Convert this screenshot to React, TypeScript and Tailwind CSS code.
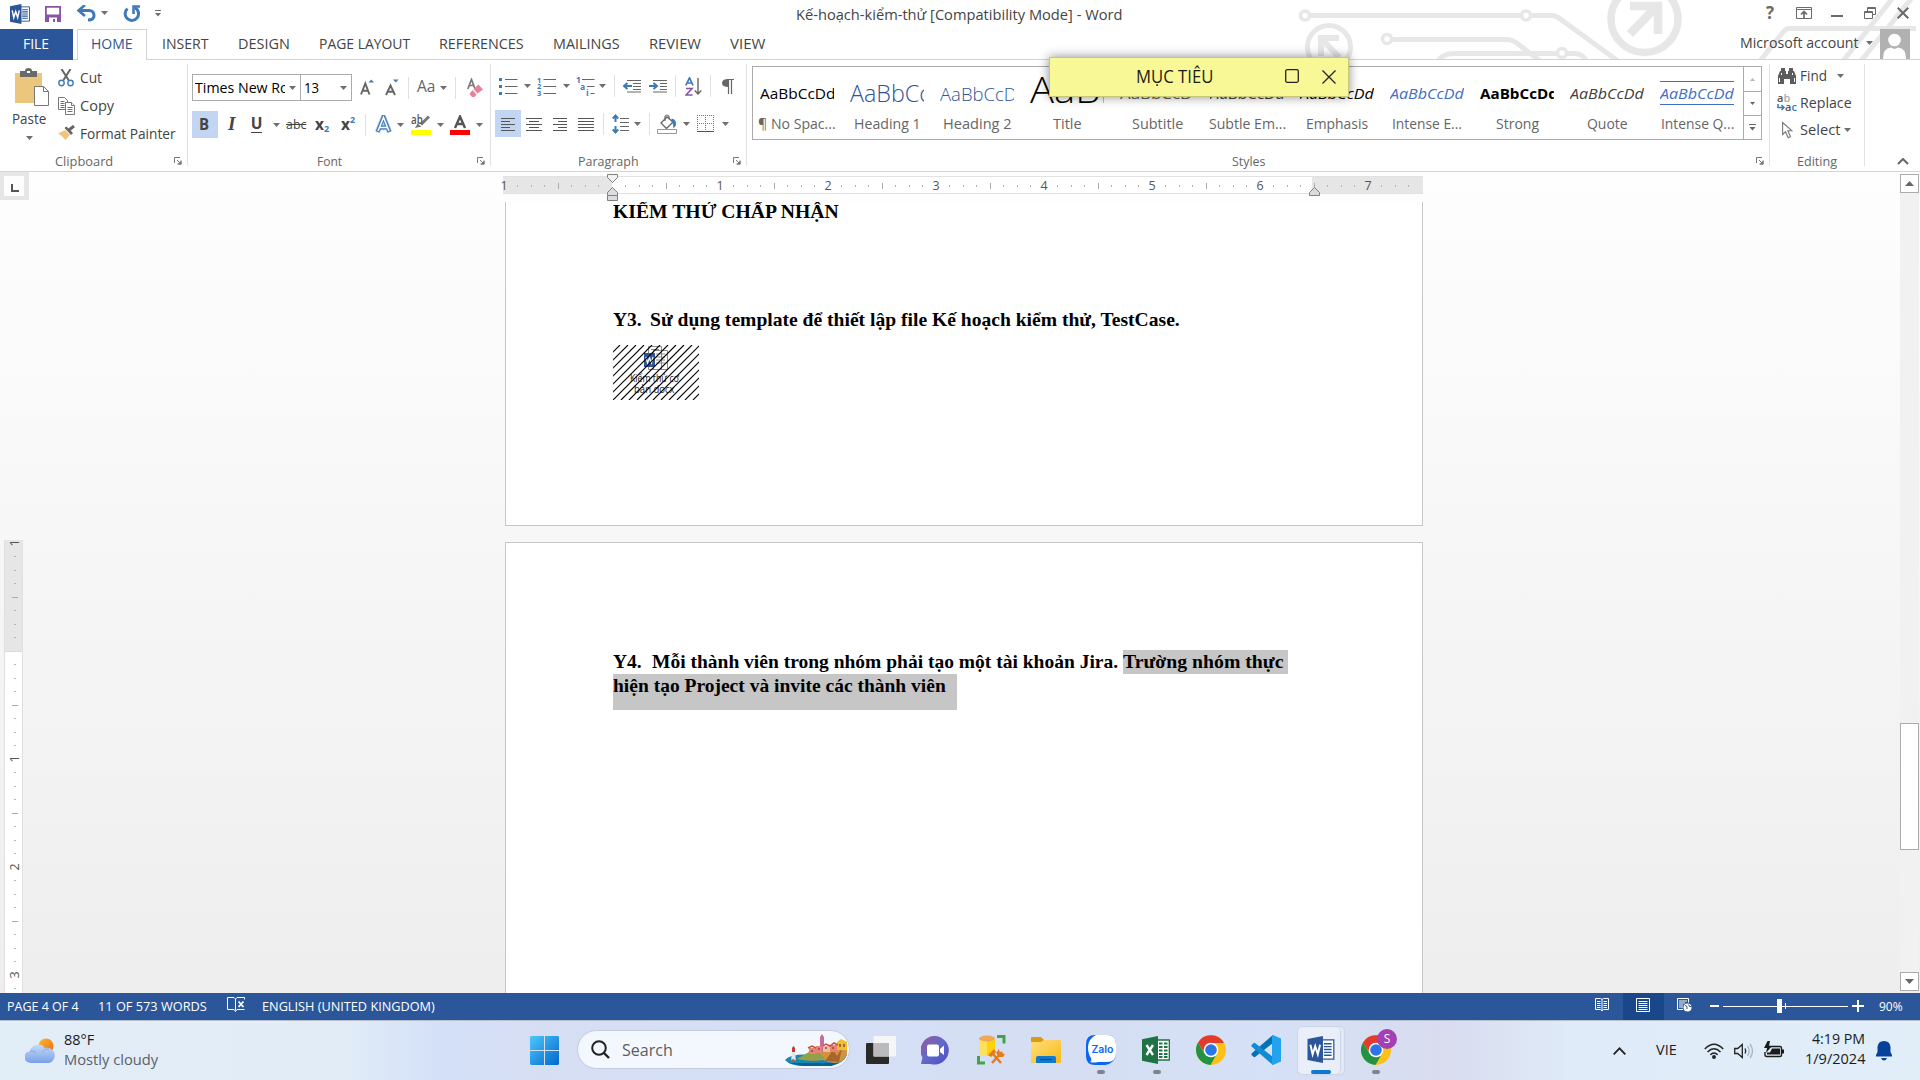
import { useLayoutEffect, useRef, useState } from "react";
import type { ReactNode } from "react";

/* Text that is squeezed or stretched to the width of its box. */
function Fit({ className = "", children }: { className?: string; children: ReactNode }) {
  const outer = useRef<HTMLSpanElement>(null);
  const inner = useRef<HTMLSpanElement>(null);
  const [scale, setScale] = useState(1);
  useLayoutEffect(() => {
    if (outer.current && inner.current) {
      setScale(outer.current.clientWidth / inner.current.offsetWidth);
    }
  }, []);
  return (
    <span ref={outer} className={"inline-flex shrink-0 items-center pb-0.5 whitespace-pre " + className}>
      <span ref={inner} className="shrink-0 origin-left" style={{ transform: `scaleX(${scale})` }}>
        {children}
      </span>
    </span>
  );
}

function Slot({ className = "", children }: { className?: string; children?: ReactNode }) {
  return <div className={"flex h-full shrink-0 items-center " + className}>{children}</div>;
}

const Caret = ({ className = "" }: { className?: string }) => (
  <svg className={"h-1 w-[7px] shrink-0 " + className} viewBox="0 0 7 4">
    <path d="M0 0h7L3.500 4z" fill="#6e6e6e" />
  </svg>
);

const Sep = () => <div className="h-[22px] w-px bg-[#e0e0e0]" />;

const Launcher = () => (
  <svg className="h-[8px] w-[8px] shrink-0" viewBox="0 0 8 8">
    <path d="M.5 6V.5H6M3 3l3.500 3.500M7 3.500V7H3.500" fill="none" stroke="#777" strokeWidth="1" />
    <path d="M7.500 3.500v4h-4z" fill="#777" />
  </svg>
);

function WordLogo({ className }: { className: string }) {
  return (
    <svg className={className} viewBox="0 0 28 28">
      <path d="M15 4h12.300v20H15z" fill="#fff" stroke="#2b579a" strokeWidth="1.300" />
      <path d="M17 8h8M17 11h8M17 14h8M17 17h8M17 20h8" stroke="#2b579a" strokeWidth="1.500" />
      <path d="M0 3.200L16 0v28L0 24.800z" fill="#2b579a" />
      <path d="M3 9l2.300 10L8 10.500l2.700 8.500L13 9" fill="none" stroke="#fff" strokeWidth="2" />
    </svg>
  );
}

function Circuit() {
  return (
    <svg className="absolute top-0 right-0 h-[59px] w-[640px]" viewBox="1280 0 640 59" fill="none" stroke="#e7e7e7" strokeWidth="5">
      <circle cx="1305" cy="15.500" r="4.500" strokeWidth="3.500" />
      <path d="M1310 15.500H1521M1531 15.500H1552Q1556 15.500 1561 19.500L1618 61" />
      <circle cx="1526" cy="15.500" r="4.500" strokeWidth="3.500" />
      <circle cx="1329" cy="47" r="21.500" />
      <path d="M1321 56V38H1339M1321 38L1339 57" strokeWidth="6" />
      <circle cx="1387" cy="39" r="4.500" strokeWidth="3.500" />
      <path d="M1392 39.500H1508Q1512 39.500 1516 42.500L1540 61" />
      <path d="M1438 61Q1443 53.500 1454 53.500H1557M1567 53.500H1575Q1582 53.500 1586 60" />
      <circle cx="1562" cy="53" r="4.500" strokeWidth="3.500" />
      <circle cx="1644.500" cy="19" r="33.500" strokeWidth="7.500" />
      <path d="M1630 6H1658V34M1657 6L1630 34" strokeWidth="8.500" />
      <path d="M1760 61L1784 31Q1786 28.500 1790 28.500H1916" />
      <path d="M1843 61L1892 -1M1861 61L1911 -1" />
    </svg>
  );
}

function TitleBar() {
  return (
    <div className="relative flex h-[29px] shrink-0 items-start">
      <Slot className="h-[27px]! w-[45px] pl-[10px]">
        <WordLogo className="h-5 w-5" />
      </Slot>
      <Slot className="h-[27px]! w-[32px]">
        <svg className="h-4 w-4" viewBox="0 0 16 16">
          <path d="M.9.9h14.200v14.200H.9z" fill="#fff" stroke="#8754a8" strokeWidth="1.800" />
          <path d="M0 8.500h16V16H0z" fill="#8754a8" />
          <path d="M4 11.500h8V16h-2v-3H8v3H4z" fill="#fff" />
        </svg>
      </Slot>
      <Slot className="h-[27px]! w-[24px]">
        <svg className="h-[17px] w-[19px]" viewBox="0 0 19 17" fill="none" stroke="#3f7ab8" strokeWidth="3">
          <path d="M3 5.500h9.500q4.500.5 4.500 5t-6 4.500" />
          <path d="M8 0L1.500 5.500 8 11" strokeWidth="2.600" />
        </svg>
      </Slot>
      <Slot className="h-[25px]! w-[22px]">
        <Caret />
      </Slot>
      <Slot className="h-[27px]! w-[32px]">
        <svg className="h-[17px] w-[17px]" viewBox="0 0 17 17" fill="none" stroke="#3f7ab8" strokeWidth="3">
          <path d="M12 2.800A6.700 6.700 0 1 1 4.500 3.600" />
          <path d="M10.500 9V1.500H17" strokeWidth="2.500" />
        </svg>
      </Slot>
      <Slot className="h-[27px]! w-[641px]">
        <svg className="h-[7px] w-[6px]" viewBox="0 0 6 7">
          <path d="M0 0h6v1H0zM0 3h6L3 6.500z" fill="#6e6e6e" />
        </svg>
      </Slot>
      <Fit className="h-[29px] w-[326px] pb-0! text-[15px] text-[#444]">Kế-hoạch-kiểm-thử [Compatibility Mode] - Word</Fit>
      <Slot className="ml-auto h-[26px]! w-[30px] text-[17px] font-bold text-[#6a6a6a]">?</Slot>
      <Slot className="h-[26px]! w-[35px]">
        <svg className="h-3 w-4" viewBox="0 0 16 12" fill="none" stroke="#6a6a6a">
          <path d="M.5.5h15v11H.5zM.5 2.500h15" />
          <path d="M8 11V5M5 7.500l3-3 3 3" strokeWidth="1.700" />
        </svg>
      </Slot>
      <Slot className="h-[32px]! w-[33px]">
        <div className="h-0.5 w-3 bg-[#6a6a6a]" />
      </Slot>
      <Slot className="h-[26px]! w-[33px]">
        <svg className="h-3 w-3" viewBox="0 0 12 12" fill="none" stroke="#6a6a6a">
          <path d="M.5 4.500h8v7h-8zM.5 5.500h8M3.500 4V.5h8v7H9M3.500 1.500h8" />
        </svg>
      </Slot>
      <Slot className="h-[26px]! w-[23px]">
        <svg className="h-3 w-3" viewBox="0 0 12 12" fill="none" stroke="#6a6a6a" strokeWidth="2">
          <path d="M.7.7l10.600 10.600M11.300.7L.7 11.300" />
        </svg>
      </Slot>
    </div>
  );
}

function TabRow() {
  return (
    <div className="relative flex h-[31px] shrink-0 items-stretch border-b border-[#d4d4d4] text-[15px] text-[#444]">
      <div className="-mb-px flex w-[73px] bg-[#2b579a] pl-[23px] text-white">
        <Fit className="w-[26px]">FILE</Fit>
      </div>
      <div className="-mb-px ml-1 flex w-[70px] border border-b-0 border-[#d4d4d4] bg-white pl-[13px] text-[#2b579a]">
        <Fit className="w-[42px] pb-[3px]!">HOME</Fit>
      </div>
      <Fit className="ml-[15px] w-[47px]">INSERT</Fit>
      <Fit className="ml-[29px] w-[52px]">DESIGN</Fit>
      <Fit className="ml-[29px] w-[91px]">PAGE LAYOUT</Fit>
      <Fit className="ml-[29px] w-[85px]">REFERENCES</Fit>
      <Fit className="ml-[29px] w-[67px]">MAILINGS</Fit>
      <Fit className="ml-[29px] w-[52px]">REVIEW</Fit>
      <Fit className="ml-[29px] w-[35px]">VIEW</Fit>
      <Fit className="ml-auto w-[119px] pb-[3px]!">Microsoft account</Fit>
      <Caret className="mr-[7px] mb-[3px] ml-[7px] self-center" />
      <svg className="mr-[10px] h-[30px] w-[30px]" viewBox="0 0 30 30">
        <path d="M0 0h30v30H0z" fill="#b1b1b1" />
        <circle cx="14.500" cy="11" r="6.300" fill="#fff" />
        <path d="M3 30q0-11 8-11.500l3.500 1.500 3.500-1.500q8 .5 8 11.500z" fill="#fff" />
      </svg>
    </div>
  );
}

function Clipboard() {
  return (
    <div className="flex w-[187px] flex-col pt-2">
      <div className="flex h-[84px]">
        <div className="w-[58px]">
          <svg className="ml-[15px] h-[38px] w-[34px]" viewBox="0 0 34 38">
            <path d="M0 5h27v30H0z" fill="#ecc67c" />
            <path d="M5 3h5q0-3 3.500-3T17 3h5v6H5z" fill="#6a6a6a" />
            <path d="M12 3h3v2h-3z" fill="#fff" />
            <path d="M19.500 18.500h9l5 5v14h-14z" fill="#fff" stroke="#777" />
            <path d="M28.500 18.500v5h5" fill="none" stroke="#777" />
          </svg>
          <Fit className="ml-3 h-[26px] w-[34px] text-[15px] text-[#444]">Paste</Fit>
          <Caret className="mt-1 ml-[26px] block" />
        </div>
        <div className="text-[15px] text-[#444]">
          <div className="flex h-5 items-center">
            <svg className="mr-[6px] h-[18px] w-4" viewBox="0 0 16 18" fill="none">
              <path d="M3.500 0l7 11M12.500 0l-7 11" stroke="#666" strokeWidth="2" />
              <circle cx="3.500" cy="14" r="2.700" stroke="#3f7ab8" strokeWidth="1.400" />
              <circle cx="12.500" cy="14" r="2.700" stroke="#3f7ab8" strokeWidth="1.400" />
            </svg>
            <Fit className="w-[22px]">Cut</Fit>
          </div>
          <div className="mt-2 flex h-5 items-center">
            <svg className="mr-[5px] h-[18px] w-[17px]" viewBox="0 0 17 18" fill="#fff" stroke="#777">
              <path d="M.5.5h6l3 3v9h-9z" />
              <path d="M2.500 4.500h4M2.500 6.500h4M2.500 8.500h4M2.500 10.500h4" stroke="#3f7ab8" />
              <path d="M7.500 5.500h6l3 3v9h-9z" />
              <path d="M13.500 5.500v3h3" />
              <path d="M9.500 10.500h5M9.500 12.500h5M9.500 14.500h5" stroke="#3f7ab8" />
            </svg>
            <Fit className="w-[34px]">Copy</Fit>
          </div>
          <div className="mt-2 flex h-5 items-center">
            <svg className="mr-[4px] mb-[3px] h-[15px] w-[18px]" viewBox="0 0 18 15">
              <path d="M0 8.500l7-3.500 5 5-4.500 5q-2.500-4-7.500-6.500z" fill="#ecc67c" />
              <path d="M6.500 3l2-1.500 6.500 6.500-2 2z" fill="#666" />
              <path d="M11 5l5-4" stroke="#666" strokeWidth="3" />
            </svg>
            <Fit className="w-[96px]">Format Painter</Fit>
          </div>
        </div>
      </div>
      <GroupLabel pad="pl-[55px] pr-[5px]">
        <Fit className="w-[58px] pb-0!">Clipboard</Fit>
      </GroupLabel>
    </div>
  );
}

function GroupLabel({ pad, launcher = true, children }: { pad: string; launcher?: boolean; children: ReactNode }) {
  return (
    <div className={"flex h-5 items-center justify-between text-[13.500px] text-[#666] " + pad}>
      {children}
      {launcher && <Launcher />}
    </div>
  );
}

const Divider = () => <div className="mt-1 h-[102px] w-px shrink-0 bg-[#e1e1e1]" />;

function FontGroup() {
  return (
    <div className="flex w-[302px] flex-col pt-[14px]">
      <div className="flex h-[27px] items-center pl-1 text-[15px] text-black">
        <div className="flex h-[27px] w-[109px] items-center border border-[#ababab] pl-[2px]">
          <div className="flex w-[90px] overflow-hidden">
            <Fit className="w-[123px] pb-px!">Times New Roman</Fit>
          </div>
          <Caret className="ml-1" />
        </div>
        <div className="-ml-px flex h-[27px] w-[52px] items-center border border-[#ababab] pl-[3px]">
          <Fit className="w-[15px] pb-px!">13</Fit>
          <Caret className="ml-[21px]" />
        </div>
        <Slot className="ml-2 w-[25px]">
          <svg className="h-[17px] w-4" viewBox="0 0 16 17">
            <path d="M1 15.500L5.300 4.500 9.500 15.500M2.700 11.700h5.300" fill="none" stroke="#666" strokeWidth="1.900" />
            <path d="M8.500 3.500l2.700-3 2.700 3z" fill="#3f7ab8" />
          </svg>
        </Slot>
        <Slot className="w-[23px]">
          <svg className="h-[17px] w-4" viewBox="0 0 16 17">
            <path d="M1 16L5.500 6.500 10 16M2.700 12.800h5.600" fill="none" stroke="#666" strokeWidth="1.900" />
            <path d="M8 .5h5.500l-2.700 3z" fill="#3f7ab8" />
          </svg>
        </Slot>
        <Slot className="w-[9px]"><Sep /></Slot>
        <Slot className="w-[23px]"><Fit className="w-[18px] text-[15.500px] text-[#666]">Aa</Fit></Slot>
        <Slot className="w-[15px]"><Caret /></Slot>
        <Slot className="w-3"><Sep /></Slot>
        <svg className="h-5 w-4" viewBox="0 0 16 20">
          <path d="M.8 11L4.500 1.500 8 11M2 7.500h5" fill="none" stroke="#777" strokeWidth="1.700" />
          <path d="M11.500 6.500l4.500 5-5.500 4-4-4.500z" fill="#e8829a" />
          <path d="M5.500 12l4 4.500-2 2.500H5l-2.500-3z" fill="#e8829a" />
        </svg>
      </div>
      <div className="mt-[10px] flex h-[27px] items-center pl-1">
        <Slot className="w-[35px]">
          <div className="flex h-[27px] w-[26px] items-center pl-[7px] bg-[#c2d5f2] text-[16.500px] font-bold text-[#444]">
            <Fit className="w-[10px] pb-px!">B</Fit>
          </div>
        </Slot>
        <Slot className="w-6 pl-px font-['Liberation_Serif'] text-[19px] font-bold text-[#444] italic">I</Slot>
        <Slot className="w-[22px]">
          <span className="flex h-[17px] w-[11px] items-center justify-center border-b border-[#444] pb-px text-[15.500px] font-bold text-[#444]">U</span>
        </Slot>
        <Slot className="w-[13px]"><Caret /></Slot>
        <Slot className="w-[29px] pt-[2px]"><Fit className="w-5 text-[13px] text-[#444] line-through">abc</Fit></Slot>
        <Slot className="w-[26px] text-[15.500px] font-bold text-[#444]">
          x<span className="mt-2 text-[9px] text-[#3f7ab8]">2</span>
        </Slot>
        <Slot className="w-6 text-[15.500px] font-bold text-[#444]">
          x<span className="-mt-[9px] text-[9px] text-[#3f7ab8]">2</span>
        </Slot>
        <Slot className="w-[10px]"><Sep /></Slot>
        <Slot className="w-[22px]">
          <svg className="h-[19px] w-[17px]" viewBox="0 0 17 19" fill="none">
            <path d="M2.500 17L8.500 2l6 15M4.500 12.500h8" stroke="#b9d5f3" strokeWidth="5.500" strokeLinejoin="round" />
            <path d="M2.500 17L8.500 2l6 15M4.500 12.500h8" stroke="#3f7ab8" strokeWidth="3.800" />
            <path d="M3 16L8.500 2.500l5.500 13.500M4.500 12.500h8" stroke="#fff" strokeWidth="1.500" />
          </svg>
        </Slot>
        <Slot className="w-[14px]"><Caret /></Slot>
        <Slot className="w-[26px]">
          <div className="flex flex-col">
            <div className="flex h-[15px] items-start">
              <Fit className="-mt-1 w-3 text-[13px] leading-4 font-semibold text-[#555]">ab</Fit>
              <svg className="-ml-2 h-[14px] w-[15px]" viewBox="0 0 15 14">
                <path d="M14 1.500L6 9.500" stroke="#777" strokeWidth="3" />
                <path d="M0 13l2.500-4.500 4 3z" fill="#777" />
              </svg>
            </div>
            <div className="h-[5px] w-5 bg-[#ff0]" />
          </div>
        </Slot>
        <Slot className="w-[13px]"><Caret /></Slot>
        <Slot className="w-[26px]">
          <div className="flex flex-col items-center">
            <svg className="h-[15px] w-5" viewBox="0 0 20 15">
              <path d="M5 13L10 1.500 15 13M6.500 9h7" fill="none" stroke="#555" strokeWidth="2.400" />
            </svg>
            <div className="h-[5px] w-5 bg-[#f00]" />
          </div>
        </Slot>
        <Caret />
      </div>
      <div className="h-[14px]" />
      <GroupLabel pad="pl-[129px] pr-[5px]"><Fit className="w-[25px] pb-0!">Font</Fit></GroupLabel>
    </div>
  );
}

const lineStroke = "#666";

function ListIcon({ kind }: { kind: "bullet" | "number" | "multi" }) {
  if (kind === "bullet")
    return (
      <svg className="h-[18px] w-[19px]" viewBox="0 0 19 18">
        <path d="M6 2.500h12.500M6 9.500h12.500M6 16.500h12.500" stroke={lineStroke} />
        <path d="M0 1h3v3H0zM0 8h3v3H0zM0 15h3v3H0z" fill="#3f7ab8" />
      </svg>
    );
  if (kind === "number")
    return (
      <svg className="h-[19px] w-[19px]" viewBox="0 0 19 19">
        <path d="M6.500 2.500H19M6.500 9.500H19M6.500 16.500H19" stroke={lineStroke} />
        <g fill="#3f7ab8" fontSize="7.500" fontWeight="700" fontFamily="Open Sans">
          <text x="0" y="5.500">1</text><text x="0" y="12.300">2</text><text x="0" y="19">3</text>
        </g>
      </svg>
    );
  return (
    <svg className="h-[19px] w-[19px]" viewBox="0 0 19 19">
      <path d="M6 2.500h12.500M11 9.500h7.500M14.500 16.500h4" stroke={lineStroke} />
      <g fill="#3f7ab8" fontSize="8.500" fontWeight="700" fontFamily="Open Sans">
        <text x="0" y="6">1</text><text x="4" y="12.500">a</text><text x="10" y="19">i</text>
      </g>
    </svg>
  );
}

function Lines({ d, className }: { d: string; className: string }) {
  return (
    <svg className={"h-[14px] " + className} viewBox="0 0 16 14" preserveAspectRatio="xMinYMin">
      <path d={d} stroke="#555" />
    </svg>
  );
}

function ParagraphGroup() {
  return (
    <div className="flex w-[255px] flex-col pt-[14px]">
      <div className="flex h-[25px] items-center pl-2">
        <Slot className="w-[25px]"><ListIcon kind="bullet" /></Slot>
        <Slot className="w-[13px]"><Caret /></Slot>
        <Slot className="w-[26px]"><ListIcon kind="number" /></Slot>
        <Slot className="w-[13px]"><Caret /></Slot>
        <Slot className="w-[23px]"><ListIcon kind="multi" /></Slot>
        <Slot className="w-[15px]"><Caret /></Slot>
        <Slot className="w-[9px]"><Sep /></Slot>
        <Slot className="w-[26px]">
          <svg className="h-[13px] w-[18px]" viewBox="0 0 18 13">
            <path d="M4 .5h14M10 3.500h8M10 6.500h8M10 9.500h8M4 12h14" stroke={lineStroke} />
            <path d="M9 6H2M4.500 3L1 6l3.500 3" stroke="#3f7ab8" strokeWidth="2" fill="none" />
          </svg>
        </Slot>
        <Slot className="w-[26px]">
          <svg className="h-[13px] w-[18px]" viewBox="0 0 18 13">
            <path d="M4 .5h14M11 3.500h7M11 6.500h7M11 9.500h7M4 12h14" stroke={lineStroke} />
            <path d="M0 6h7M4.500 3L8 6 4.500 9" stroke="#3f7ab8" strokeWidth="2" fill="none" />
          </svg>
        </Slot>
        <Slot className="w-[10px]"><Sep /></Slot>
        <Slot className="w-[25px]">
          <svg className="h-[19px] w-[17px]" viewBox="0 0 17 19" fill="none">
            <path d="M.8 8.500L4.500.8l3.500 7.700M2 6h5" stroke="#3f7ab8" strokeWidth="1.700" />
            <path d="M1 11.500h6L1 18h6.500" stroke="#8754a8" strokeWidth="1.600" />
            <path d="M13 1v16M9.800 13.500L13 17l3.200-3.500" stroke="#666" strokeWidth="1.400" />
          </svg>
        </Slot>
        <Slot className="w-3"><Sep /></Slot>
        <svg className="h-[15px] w-3" viewBox="0 0 12 15">
          <path d="M5 .5h7M6.500.5V15M9.500.5V15" stroke="#666" strokeWidth="1.200" />
          <path d="M6.500 0Q0 0 0 4t6.500 4z" fill="#666" />
        </svg>
      </div>
      <div className="mt-3 flex h-[27px] items-center pl-1">
        <Slot className="w-[31px]">
          <div className="flex h-[27px] w-[26px] items-center bg-[#c2d5f2] pl-[6px]">
            <Lines className="w-4" d="M0 1.500h14M0 4.500h9M0 7.500h14M0 10.500h9M0 13.500h14" />
          </div>
        </Slot>
        <Slot className="w-[27px]"><Lines className="w-4" d="M0 1.500h16M3 4.500h10M0 7.500h16M3 10.500h10M0 13.500h16" /></Slot>
        <Slot className="w-[25px]"><Lines className="w-4" d="M0 1.500h14M5 4.500h9M0 7.500h14M5 10.500h9M0 13.500h14" /></Slot>
        <Slot className="w-[25px]"><Lines className="w-4" d="M0 1.500h16M0 4.500h16M0 7.500h16M0 10.500h16M0 13.500h16" /></Slot>
        <Slot className="w-[9px]"><Sep /></Slot>
        <Slot className="w-[22px]">
          <svg className="h-5 w-[18px]" viewBox="0 0 18 20">
            <path d="M8 4.500h9M8 8.500h9M8 12.500h9M8 16.500h9" stroke={lineStroke} />
            <path d="M3.500 2v6M3.500 12v6M.8 4.500l2.700-3 2.700 3M.8 15.500l2.700 3 2.700-3" stroke="#3f7ab8" strokeWidth="2" fill="none" />
          </svg>
        </Slot>
        <Slot className="w-[15px]"><Caret /></Slot>
        <Slot className="w-2"><Sep /></Slot>
        <Slot className="w-[26px]">
          <svg className="h-5 w-5" viewBox="0 0 20 20">
            <path d="M4 9l6-6 6 5-6.500 6.500z" fill="#fff" stroke="#666" strokeWidth="1.300" />
            <path d="M8 7V2.500q2-3 4 0V5" fill="none" stroke="#666" strokeWidth="1.200" />
            <path d="M14.500 4.500q4 .5 4.500 4.500t-3 5q1-4-1.500-6z" fill="#3f7ab8" />
            <path d="M.5 15.500h19v4H.5z" fill="#fff" stroke="#999" />
          </svg>
        </Slot>
        <Slot className="w-[14px]"><Caret /></Slot>
        <Slot className="w-[25px]">
          <svg className="h-[17px] w-[17px]" viewBox="0 0 17 17">
            <path d="M0 .5h17M0 8.500h17M.5 0v16M8.500 0v16M16.500 0v16" stroke="#777" strokeDasharray="1 1" />
            <path d="M0 16.500h17" stroke="#555" />
          </svg>
        </Slot>
        <Caret />
      </div>
      <div className="h-[14px]" />
      <GroupLabel pad="pl-[87px] pr-[5px]"><Fit className="w-[61px] pb-0!">Paragraph</Fit></GroupLabel>
    </div>
  );
}

const styles: { sample: string; box: string; label: string; labelBox: string }[] = [
  { sample: "AaBbCcDd", box: "w-[75px] text-[15px] text-black", label: "¶ No Spac...", labelBox: "w-[78px]" },
  { sample: "AaBbCc", box: "w-[80px] text-[23px] font-light text-[#2f5597]", label: "Heading 1", labelBox: "w-[67px]" },
  { sample: "AaBbCcD", box: "w-[77px] text-[18px] font-light text-[#2f5597]", label: "Heading 2", labelBox: "w-[69px]" },
  { sample: "AaBb", box: "w-[94px] text-[37px] font-light text-black", label: "Title", labelBox: "w-[29px]" },
  { sample: "AaBbCcD", box: "w-[72px] text-[15px] text-[#5a5a5a]", label: "Subtitle", labelBox: "w-[51px]" },
  { sample: "AaBbCcDd", box: "w-[75px] text-[15px] italic text-[#404040]", label: "Subtle Em...", labelBox: "w-[77px]" },
  { sample: "AaBbCcDd", box: "w-[74px] text-[15px] italic text-black", label: "Emphasis", labelBox: "w-[62px]" },
  { sample: "AaBbCcDd", box: "w-[74px] text-[15px] italic text-[#3f6fc6]", label: "Intense E...", labelBox: "w-[70px]" },
  { sample: "AaBbCcDd", box: "w-[78px] text-[15px] font-bold text-black", label: "Strong", labelBox: "w-[43px]" },
  { sample: "AaBbCcDd", box: "w-[74px] text-[15px] italic text-[#404040]", label: "Quote", labelBox: "w-[41px]" },
  { sample: "AaBbCcDd", box: "w-[74px] text-[15px] italic text-[#3f6fc6]", label: "Intense Q...", labelBox: "w-[73px]" },
];

function sampleBox(label: string) {
  switch (label) {
    case "Intense Q...":
      return "mb-px flex h-6 items-center border-y border-[#3f6fc6]";
    case "Title":
      return "mb-[-1px] flex items-end";
    case "Heading 2":
      return "mb-[3px] flex";
    case "Heading 1":
      return "mb-[1px] flex items-end";
    default:
      return "mb-[1px] flex h-6 items-center";
  }
}

function StylesGroup() {
  return (
    <div className="flex w-[1022px] flex-col pt-[6px]">
      <div className="ml-[5px] flex h-[75px] w-[1010px] border border-[#ababab] bg-white">
        <div className="-ml-px flex">
          {styles.map((s) => (
            <div key={s.label} className="flex h-full w-[90px] shrink-0 flex-col items-center">
              <div className="mt-[2px] flex h-[37px] w-[74px] items-end overflow-hidden">
                <div className={sampleBox(s.label)}>
                  <Fit className={"pb-0! leading-none " + s.box}>{s.sample}</Fit>
                </div>
              </div>
              <Fit className={"mt-2 h-5 text-[15px] text-[#666] " + s.labelBox}>{s.label}</Fit>
            </div>
          ))}
        </div>
        <div className="ml-auto flex w-[18px] flex-col border-l border-[#ababab]">
          <div className="flex h-[25px] items-center justify-center border-b border-[#ababab]">
            <svg className="h-[3px] w-[5px]" viewBox="0 0 5 3"><path d="M0 3h5L2.500 0z" fill="#b5b5b5" /></svg>
          </div>
          <div className="flex h-[24px] items-center justify-center border-b border-[#ababab]">
            <svg className="h-[3px] w-[5px]" viewBox="0 0 5 3"><path d="M0 0h5L2.500 3z" fill="#666" /></svg>
          </div>
          <div className="flex grow items-center justify-center">
            <svg className="h-[7px] w-[7px]" viewBox="0 0 7 7"><path d="M0 0h7v1H0zM.5 3h6l-3 3.500z" fill="#666" /></svg>
          </div>
        </div>
      </div>
      <div className="h-[11px]" />
      <GroupLabel pad="pl-[485px] pr-[5px]"><Fit className="w-[33px] pb-0!">Styles</Fit></GroupLabel>
    </div>
  );
}

function EditingGroup() {
  return (
    <div className="flex w-[94px] flex-col pt-[5px] text-[15px] text-[#444]">
      <div className="flex h-[22px] items-center pl-2">
        <svg className="mr-1 h-4 w-[18px]" viewBox="0 0 18 16">
          <path d="M3 0h4v3h1v3h2V3h1V0h4v3h1l2 5v8h-6v-5H6v5H0V8l2-5h1z" fill="#5c5c5c" />
          <path d="M3.500 5v2M14.500 5v2M1.500 10v4M16.500 10v4" stroke="#fff" />
        </svg>
        <Fit className="w-[27px] pb-px!">Find</Fit>
        <Caret className="ml-[10px]" />
      </div>
      <div className="mt-[5px] flex h-[22px] items-center pl-[7px]">
        <svg className="mr-[3px] h-[19px] w-5" viewBox="0 0 20 19" fontFamily="Open Sans" fontWeight="600" fontSize="11">
          <text x="0" y="8" fill="#555">a<tspan fill="#aaa">b</tspan></text>
          <text x="8" y="17" fill="#555">a<tspan fill="#3f7ab8">c</tspan></text>
          <path d="M1 10v3.500h6M4.500 11l2.500 2.500L4.500 16" fill="none" stroke="#3f7ab8" strokeWidth="1.500" />
        </svg>
        <Fit className="w-[52px] pb-px!">Replace</Fit>
      </div>
      <div className="mt-[5px] flex h-[22px] items-center pl-3">
        <svg className="mr-[7px] h-[18px] w-[11px]" viewBox="0 0 11 18">
          <path d="M.6 1.500v12l2.900-2.700 2.700 6 2.300-1-2.600-6H10z" fill="#fff" stroke="#777" strokeWidth="1.100" />
        </svg>
        <Fit className="w-[40px] pb-px!">Select</Fit>
        <Caret className="ml-1" />
      </div>
      <div className="h-[11px]" />
      <GroupLabel launcher={false} pad="pl-[27px]"><Fit className="w-[40px] pb-0!">Editing</Fit></GroupLabel>
    </div>
  );
}

function StickyNote() {
  return (
    <div className="absolute top-[57px] left-[1049px] z-20 flex h-10 w-[300px] items-center border border-[#c9c777] bg-[#f9f897] shadow-[0_0_10px_rgba(0,0,0,0.45)]">
      <Fit className="ml-[86px] w-[77px] text-[18px] text-[#1c1c10]">MỤC TIÊU</Fit>
      <svg className="mb-0.5 ml-[72px] h-[14px] w-[14px]" viewBox="0 0 14 14"><rect x=".7" y=".7" width="12.600" height="12.600" rx="1.500" fill="none" stroke="#222" strokeWidth="1.300" /></svg>
      <svg className="ml-[23px] h-[14px] w-[14px]" viewBox="0 0 14 14"><path d="M.5.5l13 13M13.500.5l-13 13" stroke="#222" strokeWidth="1.300" /></svg>
    </div>
  );
}

function HorizontalRuler() {
  const ticks = Array.from({ length: 67 }, (_, i) => i - 7);
  return (
    <div className="relative ml-[503px] flex h-[18px] w-[920px] border-y border-[#e2e2e2] bg-white">
      <div className="w-[109px] bg-[#e6e6e6]" />
      <div className="grow" />
      <div className="w-[111px] bg-[#e6e6e6]" />
      <svg className="absolute -top-[3px] left-0 h-[30px] w-[922px] overflow-visible" viewBox="0 0 922 30">
        {ticks.map((t) => {
          const x = Math.floor(109 + t * 13.5) + 0.5;
          if (t % 8 === 0 || x > 910) return null;
          return t % 4 === 0 ? (
            <path key={t} d={`M${x} 9v6`} stroke="#aaa" />
          ) : (
            <path key={t} d={`M${x} 11v2`} stroke="#b5b5b5" />
          );
        })}
        <g fontFamily="Open Sans" fontSize="12.500" fill="#555" textAnchor="middle">
          <text x="1" y="16">1</text>
          {[1, 2, 3, 4, 5, 6, 7].map((n) => (
            <text key={n} x={109 + n * 108} y="16">{n}</text>
          ))}
        </g>
        <g fill="#f3f3f3" stroke="#808080">
          <path d="M104.500.500h10v3l-5 5-5-5z" />
          <path d="M104.500 21.500v-3l5-5 5 5v3z" fill="#dcdcdc" />
          <path d="M104.500 21.500h10v5h-10z" fill="#dcdcdc" />
          <path d="M806.500 21.500v-3l5-5 5 5v3z" fill="#dcdcdc" />
        </g>
      </svg>
    </div>
  );
}

function VerticalRuler() {
  const ticks = Array.from({ length: 33 }, (_, i) => i - 7);
  return (
    <div className="relative mt-[340px] ml-1 flex w-[19px] shrink-0 flex-col border-x border-[#e0e0e0] bg-white">
      <div className="h-[112px] border-b border-[#dadada] bg-[#e6e6e6]" />
      <svg className="absolute top-0 left-0 h-[453px] w-[17px]" viewBox="0 0 17 453">
        {ticks.map((t) => {
          const y = Math.floor(111 + t * 13.5) + 0.5;
          if (t % 8 === 0) return null;
          return t % 4 === 0 ? <path key={t} d={`M7 ${y}h6`} stroke="#aaa" /> : <path key={t} d={`M9 ${y}h2`} stroke="#b5b5b5" />;
        })}
        <g fontFamily="Open Sans" fontSize="12.500" fill="#555" textAnchor="middle">
          <text transform="translate(14 3) rotate(-90)">1</text>
          <text transform="translate(14 219) rotate(-90)">1</text>
          <text transform="translate(14 327) rotate(-90)">2</text>
          <text transform="translate(14 435) rotate(-90)">3</text>
        </g>
      </svg>
    </div>
  );
}

function EmbeddedFile() {
  return (
    <div className="relative ml-[107px] flex h-[55px] w-[86px] flex-col items-center overflow-hidden font-['Open_Sans'] text-[10px] leading-[11px] font-normal text-[#222]">
      <svg className="mt-px h-6 w-6" viewBox="0 0 24 24">
        <path d="M4.500.500h13v23h-13zM9.500 4.500h14v19h-14z" fill="#fff" stroke="#8a8a8a" />
        <path d="M7 3.500h8M12 8h9M12 11h9M12 14h9M12 17h9" stroke="#888" />
        <path d="M0 7h11v14H0z" fill="#2b579a" />
        <path d="M2 11l1.500 6 2-5 2 5 1.500-6" fill="none" stroke="#fff" strokeWidth="1.300" />
      </svg>
      <Fit className="mt-[3px] mr-1 w-[49px] pb-0!">Kiểm thử cơ</Fit>
      <Fit className="mr-1 w-[41px] pb-0!">bản.docx</Fit>
      <svg className="absolute inset-0 h-[55px] w-[86px]" viewBox="0 0 86 55">
        {Array.from({ length: 18 }, (_, i) => (
          <path key={i} d={`M${-48 + i * 8} 55L${7 + i * 8} 0`} stroke="#000" strokeWidth="1.100" />
        ))}
      </svg>
    </div>
  );
}

function Pages() {
  return (
    <div className="ml-[505px] flex h-[791px] w-[918px] flex-col overflow-hidden font-['Liberation_Serif',serif] text-[19.500px] leading-6 font-bold text-black">
      <div className="flex h-[324px] shrink-0 flex-col border border-t-0 border-[#c6c6c6] bg-white">
        <div className="flex h-[22px] items-end overflow-hidden">
          <Fit className="ml-[107px] h-6 w-[226px] pb-0!">KIỂM THỬ CHẤP NHẬN</Fit>
        </div>
        <div className="mt-[84px] ml-[107px] flex h-6">
          <Fit className="w-[28.500px] pb-0!">Y3.</Fit>
          <Fit className="ml-2 w-[530px] pb-0!">Sử dụng template để thiết lập file Kế hoạch kiểm thử, TestCase.</Fit>
        </div>
        <div className="mt-[13px]"><EmbeddedFile /></div>
      </div>
      <div className="mt-4 flex grow flex-col border border-b-0 border-[#c6c6c6] bg-white">
        <div className="mt-[107px] ml-[107px] flex h-6">
          <Fit className="w-[28.500px] pb-0!">Y4.</Fit>
          <Fit className="ml-[10.500px] w-[466px] pb-0!">Mỗi thành viên trong nhóm phải tạo một tài khoản Jira.</Fit>
          <div className="ml-[5px] flex w-[165px] bg-[#c6c6c6]">
            <Fit className="w-[160px] pb-0!">Trường nhóm thực</Fit>
          </div>
        </div>
        <div className="ml-[107px] flex h-9 w-[344px] items-start bg-[#c6c6c6]">
          <Fit className="h-6 w-[333px] pb-0!">hiện tạo Project và invite các thành viên</Fit>
        </div>
      </div>
    </div>
  );
}

function Scrollbar() {
  return (
    <div className="mt-[2px] mr-px flex h-[817px] w-[19px] flex-col bg-[#f1f1f1]">
      <div className="flex h-[19px] items-center justify-center border border-[#ababab] bg-white">
        <svg className="h-[5px] w-[9px]" viewBox="0 0 9 5"><path d="M0 5h9L4.500 0z" fill="#666" /></svg>
      </div>
      <div className="mt-[530px] h-[127px] border border-[#ababab] bg-white" />
      <div className="mt-auto flex h-[19px] items-center justify-center border border-[#ababab] bg-white">
        <svg className="h-[5px] w-[9px]" viewBox="0 0 9 5"><path d="M0 0h9L4.500 5z" fill="#666" /></svg>
      </div>
    </div>
  );
}

function Workspace() {
  return (
    <div className="flex h-[821px] shrink-0 bg-linear-to-b from-[#fefefe] to-[#eeeeee]">
      <div className="flex w-[29px] shrink-0 flex-col">
        <div className="flex h-7 w-[29px] shrink-0 items-center bg-[#e6e6e6] pl-1">
          <div className="flex h-5 w-5 bg-[#fdfdfd] pt-[8px] pl-[7px]">
            <div className="h-2 w-2 border-b-2 border-l-2 border-[#555]" />
          </div>
        </div>
        <div className="flex h-[793px]"><VerticalRuler /></div>
      </div>
      <div className="-ml-[29px] flex w-[1423px] flex-col pt-1">
        <HorizontalRuler />
        <div className="mt-2"><Pages /></div>
      </div>
      <div className="ml-auto"><Scrollbar /></div>
    </div>
  );
}

function StatusBar() {
  return (
    <div className="flex h-[27px] shrink-0 items-center bg-[#2b579a] pl-[7px] text-[13px] text-white">
      <Slot className="w-[91px]"><Fit className="w-[72px] pb-0!">PAGE 4 OF 4</Fit></Slot>
      <Slot className="w-[129px]"><Fit className="w-[109px] pb-0!">11 OF 573 WORDS</Fit></Slot>
      <Slot className="w-[35px]">
        <svg className="mb-1 h-[15px] w-[18px]" viewBox="0 0 18 15" fill="none" stroke="#fff">
          <path d="M8.500 13.500V2L7 .5H.5v12H7l1.500 2L10 12.500h7.500M8.500 2L10 .5h7.500v2" />
          <path d="M11.500 4.500l5 5.500M16.500 4.500l-5 5.500" strokeWidth="1.800" />
        </svg>
      </Slot>
      <Fit className="w-[173px] pb-0!">ENGLISH (UNITED KINGDOM)</Fit>
      <Slot className="ml-auto w-[28px]">
        <svg className="mb-[3px] h-[14px] w-[14px]" viewBox="0 0 14 14" fill="none" stroke="#fff">
          <path d="M7 1.500L5.500.5H.5v11h5L7 13l1.500-1.500h5V.5h-5L7 1.500zV13M2 3.500h3.500M2 5.500h3.500M2 7.500h3.500M2 9.500h3.500M8.500 3.500H12M8.500 5.500H12M8.500 7.500H12M8.500 9.500H12" />
        </svg>
      </Slot>
      <Slot className="w-[41px] justify-center bg-[#19478a]">
        <svg className="mr-px mb-[3px] h-[14px] w-[14px]" viewBox="0 0 14 14" fill="none" stroke="#fff">
          <path d="M.5.5h13v13H.5zM2.500 3.500h9M2.500 5.500h9M2.500 7.500h9M2.500 9.500h9M2.500 11.500h9" />
        </svg>
      </Slot>
      <Slot className="w-[46px] pl-[13px]">
        <svg className="mb-[3px] h-[14px] w-[15px]" viewBox="0 0 15 14" fill="none" stroke="#fff">
          <path d="M6 11.500H.5V.5h11v4M2 3h8M2 5h6M2 7h4M2 9h4" />
          <circle cx="10.500" cy="9.500" r="4" fill="#fff" stroke="none" />
          <path d="M8 7.500l2 1v2.500M11.500 6.500l1 2h2" stroke="#2b579a" />
        </svg>
      </Slot>
      <Slot className="w-[13px]"><div className="mb-px h-0.5 w-[9px] bg-white" /></Slot>
      <Slot className="w-[129px]">
        <div className="mb-px flex h-[14px] w-[125px] items-center">
          <div className="h-px w-[54px] bg-white" />
          <div className="h-[14px] w-[5px] bg-white" />
          <div className="h-px w-[3px] bg-white" />
          <div className="h-[6px] w-px bg-white" />
          <div className="h-px grow bg-white" />
        </div>
      </Slot>
      <Slot className="w-[27px]">
        <svg className="mb-px h-3 w-3" viewBox="0 0 12 12"><path d="M0 6h12M6 0v12" stroke="#fff" strokeWidth="2" /></svg>
      </Slot>
      <Fit className="mr-[17px] w-6 pb-0!">90%</Fit>
    </div>
  );
}

function ChromeLogo() {
  return (
    <svg className="h-[30px] w-[30px]" viewBox="0 0 30 30">
      <circle cx="15" cy="15" r="15" fill="#fbc116" />
      <path d="M2 7.500A15 15 0 0 0 14.500 30L21 18.500 8.500 18.500z" fill="#229342" />
      <path d="M15 8h13a15 15 0 0 0-26-.5l7 11z" fill="#e33b2e" />
      <circle cx="15" cy="15" r="7.300" fill="#fff" />
      <circle cx="15" cy="15" r="5.800" fill="#2b75e8" />
    </svg>
  );
}

function TaskIcon({ pitch, dot, children }: { pitch: string; dot?: boolean; children: ReactNode }) {
  return (
    <div className={"flex h-full shrink-0 flex-col " + pitch}>
      <div className="mt-[14px] flex h-[30px] items-center">{children}</div>
      {dot && <div className="mt-[5px] ml-[11px] h-1 w-2 rounded-full bg-[#7f838c]" />}
    </div>
  );
}

function Taskbar() {
  return (
    <div className="flex h-[60px] shrink-0 border-t border-[#b8bfca] bg-[linear-gradient(90deg,#e1edf7_0%,#e1ecf7_18%,#d3e0f8_23%,#d6def3_28%,#d4dff7_40%,#d5def2_55%,#d5e1f7_66%,#d8dcee_75%,#dfebf8_82%,#e1eef8_100%)]">
      <div className="flex w-[530px] items-center pl-[25px]">
        <svg className="mr-[9px] h-[26px] w-[30px]" viewBox="0 0 30 26">
          <defs>
            <linearGradient id="cloud" x1="0" y1="0" x2="0" y2="1"><stop stopColor="#c6dafa" /><stop offset="1" stopColor="#7ba1e6" /></linearGradient>
            <linearGradient id="sun" x1="0" y1="0" x2="1" y2="1"><stop stopColor="#f8bb2d" /><stop offset="1" stopColor="#ee6a12" /></linearGradient>
          </defs>
          <circle cx="21" cy="8" r="7.500" fill="url(#sun)" />
          <path d="M6 25a6 6 0 0 1-1-12A8.500 8.500 0 0 1 20 10a7.700 7.700 0 0 1 4 15z" fill="url(#cloud)" />
          <path d="M5 13q3-1 6 2M17 14q3-4 7-3" stroke="#82a7e8" fill="none" />
        </svg>
        <div className="mb-0.5 flex flex-col text-[15px] leading-5">
          <Fit className="h-5 w-[30px] text-[#1b1b1b]">88°F</Fit>
          <Fit className="h-5 w-[94px] text-[#5b6067]">Mostly cloudy</Fit>
        </div>
      </div>
      <TaskIcon pitch="w-[47px]">
        <svg className="h-[29px] w-[29px]" viewBox="0 0 29 29">
          <defs><linearGradient id="win" x1="0" y1="0" x2="1" y2="1"><stop stopColor="#4cc8fb" /><stop offset="1" stopColor="#0067ce" /></linearGradient></defs>
          <path d="M1 0h13v14H0V1zM15 0h13l1 1v13H15zM0 15h14v14H1l-1-1zM15 15h14v13l-1 1H15z" fill="url(#win)" />
        </svg>
      </TaskIcon>
      <div className="mt-[9px] mr-4 flex h-[39px] w-[273px] items-center rounded-full border border-[#c3cbdc] bg-[#f3f7fe] pl-[13px]">
        <svg className="h-[19px] w-[19px]" viewBox="0 0 19 19"><circle cx="8" cy="8" r="6.800" fill="none" stroke="#222" strokeWidth="2" /><path d="M13 13l5 5" stroke="#222" strokeWidth="2.400" /></svg>
        <Fit className="ml-[12px] w-[51px] pb-0! text-[17px] text-[#5e5e5e]">Search</Fit>
        <svg className="mr-[2px] ml-auto h-[32px] w-[62px]" viewBox="0 0 62 32">
          <path d="M0 26q6-7 30-5h32q-3 8-16 11H20Q5 32 0 26z" fill="#1387b8" />
          <path d="M4 29h50l-8 3H18z" fill="#09608f" />
          <path d="M12 25L30 15 62 12V20Q59 29 49 29q-7-1-11-3-12 2-26-1z" fill="#d3923d" />
          <path d="M12 25L24 18 34 18 40 25 30 26z" fill="#93a044" />
          <path d="M40 27L48 16l4 6 5-8-3 14z" fill="#a9652a" />
          <path d="M35 3l2-3 2 3v15h-4z" fill="#c66ba2" />
          <path d="M24 14h7v6h-7zM31 12h6v7h-6zM45 11h7v7h-7z" fill="#e88274" />
          <path d="M38 12h7v6h-7z" fill="#f7b9a0" />
          <path d="M52 8l4-3 6 3v8H52z" fill="#f1bf2b" />
          <path d="M23 14l4-2 4 2M38 12l3-2 4 2 4-3 4 2" stroke="#c94e3b" strokeWidth="1.500" fill="none" />
          <path d="M27 16v2M34 14v2M41 13v2M48 13v2M55 10v3M59 10v3" stroke="#8d4d38" strokeWidth="1.500" />
          <path d="M7 16h3l1 12H6z" fill="#dfe6ec" /><path d="M7 14l1.500-2 1.500 2v4H7z" fill="#c63b32" />
          <path d="M3 28l5-3 6 3z" fill="#8b6a58" />
        </svg>
      </div>
      <TaskIcon pitch="w-[55px]">
        <svg className="h-[28px] w-[30px]" viewBox="0 0 30 28">
          <rect y="7" width="23" height="21" rx="1" fill="#2a2a29" />
          <rect x="7.500" width="22.500" height="20.500" rx="1" fill="#f7f7f7" fillOpacity=".95" />
          <path d="M7.500 7H23v13.500H7.500z" fill="#bbb" />
        </svg>
      </TaskIcon>
      <TaskIcon pitch="w-[56px]">
        <svg className="h-[29px] w-[29px]" viewBox="0 0 29 29">
          <defs><linearGradient id="chat" x1="0" y1="0" x2="1" y2="1"><stop stopColor="#9a5a9b" /><stop offset=".5" stopColor="#6168cb" /><stop offset="1" stopColor="#4b4fbf" /></linearGradient></defs>
          <path d="M14.500 0a14.300 14.300 0 1 1-5 28H0l1.500-6.500A14.300 14.300 0 0 1 14.500 0z" fill="url(#chat)" />
          <rect x="6" y="8.500" width="12" height="12" rx="2" fill="#fff" />
          <path d="M19 13l4-3.500V19l-4-3z" fill="#fff" />
        </svg>
      </TaskIcon>
      <TaskIcon pitch="w-[54px]">
        <svg className="h-[30px] w-[29px]" viewBox="0 0 29 30">
          <path d="M2 3.500h16V19q-8 4-16 0z" fill="#fde05c" />
          <path d="M10 3.500h8V19q-4 2-8 2z" fill="#fcd208" />
          <ellipse cx="10" cy="3.500" rx="8" ry="3" fill="#eda757" />
          <path d="M20 1.500h7v7M1.500 21v7H8" fill="none" stroke="#46a24a" strokeWidth="3" />
          <path d="M15 28L25 17M24 28L16 19" stroke="#e87a1e" strokeWidth="2.500" />
          <path d="M11 20l6-6 2 3-5 5zM22 14l1 4 5 1-2 3h-4l-3-4z" fill="#e87a1e" />
        </svg>
      </TaskIcon>
      <TaskIcon pitch="w-[55px]">
        <svg className="h-[28px] w-[30px]" viewBox="0 0 30 28">
          <defs><linearGradient id="folder" x1="0" y1="0" x2="1" y2="1"><stop stopColor="#ffe07a" /><stop offset="1" stopColor="#f9b71b" /></linearGradient></defs>
          <path d="M0 2q0-1 1-1h9l3 3v4H0z" fill="#dc9a10" />
          <path d="M0 6h10l3-2h16l1 1v21l-1 1H0z" fill="url(#folder)" />
          <path d="M5 27v-5q0-2 2-2h16q2 0 2 2v5z" fill="#1179cf" /><path d="M9 23.500h12" stroke="#0a4f93" strokeWidth="1.300" />
        </svg>
      </TaskIcon>
      <TaskIcon pitch="w-[56px]" dot>
        <svg className="h-[30px] w-[30px]" viewBox="0 0 30 30">
          <path d="M9 0h12q9 0 9 9v9q0 10-11 12H9q-9 0-9-9V9q0-9 9-9z" fill="#0a66f2" />
          <path d="M10 0h11q9 0 9 9v9q0 9-9 9H12q-4 1-8 0 2-1 1-4-3-4-3-11 0-8 8-12z" fill="#fff" />
          <text x="5.500" y="17.500" fontFamily="Inter" fontWeight="600" fontSize="9.800" fill="#0a66f2" textLength="22" lengthAdjust="spacingAndGlyphs">Zalo</text>
        </svg>
      </TaskIcon>
      <TaskIcon pitch="w-[54px]" dot>
        <svg className="h-[28px] w-[28px]" viewBox="0 0 28 28">
          <path d="M15 4h12.300v20H15z" fill="#fff" stroke="#1f7244" strokeWidth="1.300" />
          <path d="M17 7.500h3.500M17 11h3.500M17 14.500h3.500M17 18h3.500M17 21h3.500M22 7.500h3.500M22 11h3.500M22 14.500h3.500M22 18h3.500M22 21h3.500" stroke="#1f7244" strokeWidth="2.200" />
          <path d="M0 3.200L16 0v28L0 24.800z" fill="#1f7244" />
          <path d="M4.500 9l6.500 10M11 9L4.500 19" stroke="#fff" strokeWidth="2.300" />
        </svg>
      </TaskIcon>
      <TaskIcon pitch="w-[55px]"><ChromeLogo /></TaskIcon>
      <TaskIcon pitch="w-[46px]">
        <svg className="h-[30px] w-[30px]" viewBox="0 0 30 30">
          <path d="M22 0v8L4 22l-1 .300L.500 20V18.500z" fill="#0073b7" />
          <path d="M22 30v-8L4 8 3 7.700.500 10v1.500z" fill="#118bd3" />
          <path d="M22 0l8 3.500v23L22 30q-1-.300-1-2V2q0-1.500 1-2z" fill="#23a3ee" />
        </svg>
      </TaskIcon>
      <div className="mt-[5px] mr-4 flex h-[49px] w-[48px] rounded-[5px] border border-[#ccd5e8] bg-[#e1e8f6]">
        <div className="flex w-[43px] flex-col items-center rounded-[5px] border-r border-[#ccd5e8] bg-[#e9eef9] pt-[9px]">
          <WordLogo className="ml-1 h-[27px] w-[28px]" />
          <div className="mt-[7px] ml-1 h-1 w-5 rounded-full bg-[#0c78d4]" />
        </div>
      </div>
      <TaskIcon pitch="relative w-[252px]" dot>
        <ChromeLogo />
        <span className="absolute top-[8px] left-4 flex h-5 w-5 items-center justify-center rounded-full bg-[#a340b5] text-[12px] text-white">S</span>
      </TaskIcon>
      <div className="flex items-center">
        <Slot className="w-[43px]"><svg className="h-[8px] w-[13px]" viewBox="0 0 13 8"><path d="M.7 7.300L6.500 1.300l5.800 6" fill="none" stroke="#222" strokeWidth="1.800" /></svg></Slot>
        <Slot className="w-[48px]"><Fit className="w-[21px] pb-px! text-[14.500px] text-[#222]">VIE</Fit></Slot>
        <Slot className="w-[30px]">
          <svg className="h-4 w-5" viewBox="0 0 20 16" fill="none" stroke="#222" strokeWidth="1.500">
            <path d="M.8 6q9.200-9.500 18.400 0M3.500 9q6.500-6.500 13 0M6.300 11.800q3.700-3.500 7.400 0" /><circle cx="10" cy="14" r="1.200" fill="#222" />
          </svg>
        </Slot>
        <Slot className="w-[30px]">
          <svg className="h-4 w-5" viewBox="0 0 20 16" fill="none" stroke="#222" strokeWidth="1.300">
            <path d="M.7 5.500h3L8.300 1.500v13L3.700 10.500h-3zM11 5.500q1.500 2.500 0 5" /><path d="M13.500 3q3.500 5 0 10M16 1q5 7 0 14" stroke="#a9b4c0" />
          </svg>
        </Slot>
        <Slot className="w-[40px] pb-0.5">
          <svg className="h-[17px] w-5" viewBox="0 0 20 17">
            <path d="M4 5.500h12q1.500 0 1.500 1.500v7q0 1.500-1.500 1.500H2.500Q1 15.500 1 14v-3" fill="none" stroke="#1b1b1b" strokeWidth="1.400" />
            <path d="M8 7.500h8v6H3v-2h3zM18 8.500h2v4h-2zM3.500 0L0 7h3l-1 5 6-7H5l1-5z" fill="#1b1b1b" />
          </svg>
        </Slot>
        <div className="mb-0.5 flex w-[61px] flex-col items-end text-[15px] text-[#1b1b1b]">
          <Fit className="h-5 w-[53px]">4:19 PM</Fit>
          <Fit className="h-5 w-[60px]">1/9/2024</Fit>
        </div>
        <svg className="ml-[11px] h-5 w-4" viewBox="0 0 16 20"><path d="M8 0q6 0 6.500 6v5L16 14v1.500H0V14l1.500-3V6Q2 0 8 0zM5 17h6q-1 2.500-3 2.500T5 17z" fill="#06429b" /></svg>
      </div>
    </div>
  );
}

export default function App() {
  return (
    <div className="relative flex h-[1080px] w-[1920px] flex-col overflow-hidden bg-white font-['Open_Sans',sans-serif]">
      <Circuit />
      <TitleBar />
      <TabRow />
      <div className="flex h-[112px] shrink-0 items-stretch border-b border-[#d4d4d4] bg-white">
        <Clipboard />
        <Divider />
        <FontGroup />
        <Divider />
        <ParagraphGroup />
        <Divider />
        <StylesGroup />
        <Divider />
        <EditingGroup />
        <Divider />
        <svg className="mt-[98px] ml-8 h-[7px] w-3" viewBox="0 0 12 7"><path d="M1 6l5-5 5 5" fill="none" stroke="#666" strokeWidth="2" /></svg>
      </div>
      <Workspace />
      <StatusBar />
      <Taskbar />
      <StickyNote />
    </div>
  );
}
